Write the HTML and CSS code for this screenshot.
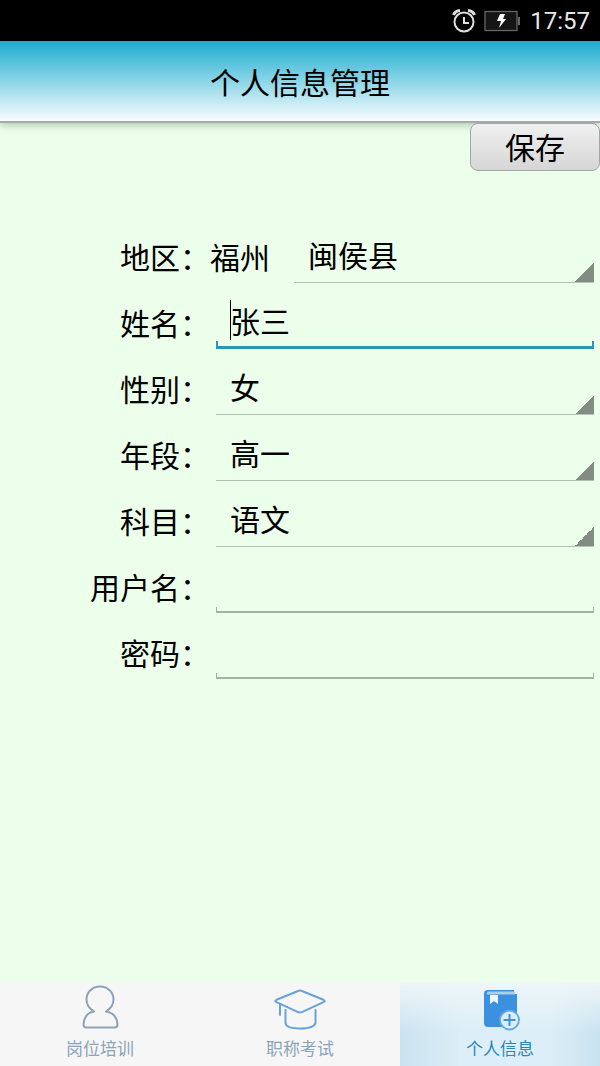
FILE: index.html
```html
<!DOCTYPE html>
<html lang="zh-CN">
<head>
  <meta charset="UTF-8">
  <meta name="viewport" content="width=device-width, initial-scale=1.0">
  <title>个人信息管理</title>
  <link rel="stylesheet" href="styles.css">
</head>
<body>

  <!-- Status bar -->
  <div class="status-bar">
    <svg width="24" height="24" viewBox="0 0 24 24" fill="none" stroke="#e0e0e0" stroke-width="2">
      <circle cx="12" cy="13" r="9.500"/>
      <path d="M12 8v6h5"/>
      <path d="M1.500 6Q3 2 8 1.500M22.500 6Q21 2 16 1.500" stroke-width="3"/>
    </svg>
    <svg width="36" height="22" viewBox="0 0 36 22">
      <rect x="1" y="1.500" width="32" height="19" fill="#151515" stroke="#666" stroke-width="1.300"/>
      <rect x="34" y="7" width="2" height="8" fill="#666"/>
      <path d="M16 4h5l-2 5h3l-7 9 2-7h-4z" fill="#fff"/>
    </svg>
    <span class="time">17:57</span>
  </div>

  <header class="title-bar">
    <h1>个人信息管理</h1>
  </header>

  <main>
    <form class="profile-form" id="profileForm">
      <div class="actions">
        <button type="submit" class="save-button">保存</button>
      </div>

      <div class="row">
        <label for="county">地区：</label>
        <span class="city">福州</span>
        <div class="field">
          <select id="county">
            <option>闽侯县</option>
          </select>
        </div>
      </div>

      <div class="row">
        <label for="name">姓名：</label>
        <div class="field">
          <input type="text" id="name" class="active" value="张三">
          <span class="caret"></span>
        </div>
      </div>

      <div class="row">
        <label for="gender">性别：</label>
        <div class="field">
          <select id="gender">
            <option>女</option>
          </select>
        </div>
      </div>

      <div class="row">
        <label for="grade">年段：</label>
        <div class="field">
          <select id="grade">
            <option>高一</option>
          </select>
        </div>
      </div>

      <div class="row">
        <label for="subject">科目：</label>
        <div class="field">
          <select id="subject">
            <option>语文</option>
          </select>
        </div>
      </div>

      <div class="row">
        <label for="username">用户名：</label>
        <div class="field">
          <input type="text" id="username">
        </div>
      </div>

      <div class="row">
        <label for="password">密码：</label>
        <div class="field">
          <input type="password" id="password">
        </div>
      </div>
    </form>
  </main>

  <!-- Bottom tabs -->
  <nav class="tabs">
    <a href="#training" class="tab">
      <svg width="52" height="46" viewBox="0 0 52 46" fill="none" stroke="#8ba4b8" stroke-width="2">
        <path d="M20 26.500C15 23.500 12.500 19.500 12.500 14.500C12.500 7 18.500 1.500 26 1.500S39.500 7 39.500 14.500C39.500 19.500 37 23.500 32 26.500C39 27.500 43 32 43.500 39.500Q43.500 42.500 40.500 42.500H12.500Q9.500 42.500 9.500 39.500C10 32 14 27.500 20 26.500Z" stroke-linejoin="round"/>
      </svg>
      <span>岗位培训</span>
    </a>
    <a href="#exam" class="tab">
      <svg width="52" height="46" viewBox="0 0 52 46" fill="none" stroke="#69a2da" stroke-width="2" stroke-linecap="round" stroke-linejoin="round">
        <path d="M23.500 6.200Q26 5 28.500 6.200L49.500 14.800Q52 16 49.500 17.200L28.500 26.800Q26 28 23.500 26.800L2.500 17.200Q0 16 2.500 14.800Z"/>
        <path d="M6 19v11M11.500 25v13Q12 43.500 26 43.500T41.500 38V25"/>
      </svg>
      <span>职称考试</span>
    </a>
    <a href="#profile" class="tab current">
      <svg width="52" height="46" viewBox="0 0 52 46">
        <path d="M14 5H40V9H43V38Q43 42 39 42H14Q10 42 10 38V9Q10 5 14 5Z" fill="#3b91e0"/>
        <path d="M14 6.500H41V9.500H13Q12.500 7 14 6.500Z" fill="#a8d0ee"/>
        <path d="M16 10H24V19L20 16L16 19Z" fill="#eef7fd"/>
        <circle cx="35.500" cy="35" r="9.500" fill="#dceefa" stroke="#62a8e2" stroke-width="1.800"/>
        <path d="M35.500 29V41M29.500 35H41.500" stroke="#3b91e0" stroke-width="2"/>
      </svg>
      <span>个人信息</span>
    </a>
  </nav>

</body>
</html>
```
FILE: styles.css
```css
* {
  margin: 0;
  padding: 0;
  box-sizing: border-box;
}

body {
  font-family: Roboto, "Noto Sans CJK SC", sans-serif;
  font-size: 30px;
  color: #000;
  background-color: #ebffeb;
  display: flex;
  flex-direction: column;
  min-height: 100vh;
}

/* Status bar */
.status-bar {
  display: flex;
  justify-content: flex-end;
  align-items: center;
  gap: 8px;
  height: 41px;
  padding-right: 10px;
  background-color: #000;
}

.time {
  margin-left: 2px;
  font-size: 24px;
  color: #e8e8e8;
}

/* Title bar */
.title-bar {
  height: 82px;
  display: flex;
  align-items: center;
  justify-content: center;
  background: linear-gradient(#1cadcf, #fafdff);
  border-bottom: 2px solid #a3aba8;
  box-shadow: 0 2px 8px rgba(0, 0, 0, 0.25);
}

.title-bar h1 {
  font-size: 30px;
  font-weight: normal;
}

main {
  flex-grow: 1;
}

/* Form */
.profile-form {
  padding-right: 6px;
}

.actions {
  display: flex;
  justify-content: flex-end;
  margin-right: -6px;
  margin-bottom: 58px;
}

.save-button {
  position: relative; /* Stay above the title bar shadow */
  width: 130px;
  height: 48px;
  padding-top: 4px;
  font-family: inherit;
  font-size: 30px;
  line-height: 40px;
  color: #000;
  border: 1px solid #a0a8a0;
  border-radius: 8px;
  background: linear-gradient(#f0f0f0, #d6d6d6);
  cursor: pointer;
}

.row {
  display: flex;
  align-items: center;
  height: 54px;
  margin-bottom: 12px;
}

.row label {
  width: 210px;
  text-align: right;
}

.city {
  margin-right: 18px;
}

.field {
  position: relative;
  flex: 1;
  margin-left: 6px;
}

.field input,
.field select {
  display: block;
  width: 100%;
  height: 54px;
  padding: 0 14px;
  font-family: inherit;
  font-size: 30px;
  color: #000;
  border: none;
  border-radius: 0;
  outline: none;
  appearance: none;
}

.field input {
  --line: #a3b3a3;
  padding-bottom: 4px;
  background:
    linear-gradient(var(--line), var(--line)) left bottom / 1px 6px no-repeat,
    linear-gradient(var(--line), var(--line)) right bottom / 1px 6px no-repeat,
    linear-gradient(var(--line), var(--line)) left bottom / 100% 2px no-repeat;
}

.field input.active {
  --line: #2b96b4;
  background-size: 2px 8px, 2px 8px, 100% 3px;
}

/* Grey triangle in the bottom right corner */
.field select {
  padding-top: 2px;
  background: linear-gradient(135deg, transparent 50%, #828c82 50%) right bottom / 20px 20px no-repeat;
  border-bottom: 1px solid #b4c4b4;
  background-origin: border-box;
}

.caret {
  position: absolute;
  left: 14px;
  top: 5px;
  width: 1px;
  height: 40px;
  background-color: #000;
}

/* Bottom tabs */
.tabs {
  display: flex;
  height: 84px;
  background-color: #f6f6f6;
}

.tab {
  flex: 1;
  display: flex;
  flex-direction: column;
  align-items: center;
  padding-top: 3px;
  gap: 6px;
  font-size: 17px;
  line-height: 24px;
  color: #8ba4b8;
  text-decoration: none;
}

.tab.current {
  color: #2a86b8;
  background:
    linear-gradient(#eef6f9, rgba(238, 246, 249, 0) 60%),
    linear-gradient(90deg, #c9e3f0, #dceef7 30%, #dceef7 75%, #c9e3f0);
}
```
